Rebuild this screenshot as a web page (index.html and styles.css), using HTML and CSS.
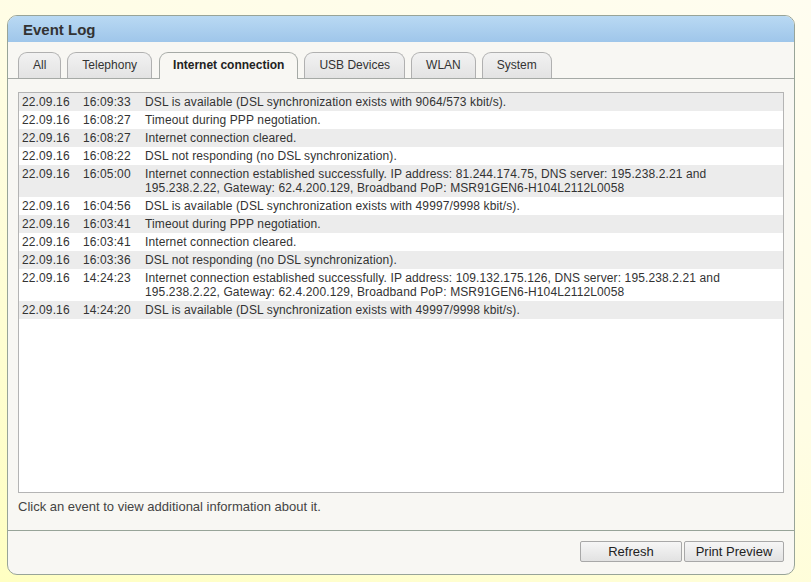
FILE: index.html
```html
<!DOCTYPE html>
<html lang="en">
<head>
    <meta charset="UTF-8">
    <title>Event Log</title>
    <link rel="stylesheet" href="styles.css">
</head>
<body>
    <div class="panel">
        <div class="panel-head">Event Log</div>

        <div class="tabs">
            <div class="tab">All</div>
            <div class="tab">Telephony</div>
            <div class="tab active">Internet connection</div>
            <div class="tab">USB Devices</div>
            <div class="tab">WLAN</div>
            <div class="tab">System</div>
        </div>

        <div class="log">
            <div class="row"><span>22.09.16</span><span>16:09:33</span><span>DSL is available (DSL synchronization exists with 9064/573 kbit/s).</span></div>
            <div class="row"><span>22.09.16</span><span>16:08:27</span><span>Timeout during PPP negotiation.</span></div>
            <div class="row"><span>22.09.16</span><span>16:08:27</span><span>Internet connection cleared.</span></div>
            <div class="row"><span>22.09.16</span><span>16:08:22</span><span>DSL not responding (no DSL synchronization).</span></div>
            <div class="row"><span>22.09.16</span><span>16:05:00</span><span>Internet connection established successfully. IP address: 81.244.174.75, DNS server: 195.238.2.21 and 195.238.2.22, Gateway: 62.4.200.129, Broadband PoP: MSR91GEN6-H104L2112L0058</span></div>
            <div class="row"><span>22.09.16</span><span>16:04:56</span><span>DSL is available (DSL synchronization exists with 49997/9998 kbit/s).</span></div>
            <div class="row"><span>22.09.16</span><span>16:03:41</span><span>Timeout during PPP negotiation.</span></div>
            <div class="row"><span>22.09.16</span><span>16:03:41</span><span>Internet connection cleared.</span></div>
            <div class="row"><span>22.09.16</span><span>16:03:36</span><span>DSL not responding (no DSL synchronization).</span></div>
            <div class="row"><span>22.09.16</span><span>14:24:23</span><span>Internet connection established successfully. IP address: 109.132.175.126, DNS server: 195.238.2.21 and 195.238.2.22, Gateway: 62.4.200.129, Broadband PoP: MSR91GEN6-H104L2112L0058</span></div>
            <div class="row"><span>22.09.16</span><span>14:24:20</span><span>DSL is available (DSL synchronization exists with 49997/9998 kbit/s).</span></div>
        </div>

        <p class="hint">Click an event to view additional information about it.</p>

        <div class="buttons">
            <button class="btn btn-refresh">Refresh</button>
            <button class="btn btn-print">Print Preview</button>
        </div>
    </div>
</body>
</html>
```

FILE: styles.css
```css
body {
    margin: 0;
    padding: 15px 0 0 7px;
    height: 582px;
    box-sizing: border-box;
    font-family: "Liberation Sans", Arial, sans-serif;
    font-size: 12px;
    color: #333;
    background: linear-gradient(205deg, #fffdf0 0%, #fffde4 45%, #ffffc2 100%);
}

.panel {
    width: 788px;
    height: 560px;
    box-sizing: border-box;
    border: 1px solid #98a498;
    border-radius: 10px;
    background-color: #f8f7f3;
    display: flex;
    flex-direction: column;
    overflow: hidden;
}

.panel-head {
    height: 26px;
    line-height: 27px;
    padding-left: 15px;
    font-size: 15px;
    font-weight: bold;
    color: #333;
    background: linear-gradient(to bottom, #b9d9f3, #9fc6ea);
}

.tabs {
    display: flex;
    gap: 6px;
    margin-top: 10px;
    padding-left: 10px;
    border-bottom: 1px solid #a6aaa6;
    height: 26px;
}

.tab {
    height: 25px;
    line-height: 24px;
    padding: 0 14px;
    border: 1px solid #b0b0b0;
    border-bottom: none;
    border-radius: 9px 9px 0 0;
    background: linear-gradient(to bottom, #f2f2f2, #e3e3e3);
    color: #333;
}

.tab.active {
    height: 26px;
    padding: 0 13px;
    margin-left: 1px;
    font-weight: bold;
    color: #222;
    background: #f8f7f3;
    border-color: #a6aaa6;
}

.log {
    margin: 13px 10px 0 10px;
    height: 401px;
    box-sizing: border-box;
    border: 1px solid #b4b4b4;
    background-color: #fff;
}

.row {
    display: grid;
    grid-template-columns: 61px 62px 1fr;
    padding: 2px 50px 2px 3px;
    line-height: 14px;
    letter-spacing: 0.12px;
    color: #333;
}

.row:nth-child(odd) {
    background-color: #ececec;
}

.hint {
    margin: 7px 0 0 10px;
    line-height: 14px;
    font-size: 13px;
    color: #444;
}

.buttons {
    margin-top: 16px;
    border-top: 1px solid #98a498;
    display: flex;
    justify-content: flex-end;
    gap: 2px;
    padding: 10px 10px 0 0;
}

.btn {
    height: 21px;
    padding: 0;
    border: 1px solid #a8a8a8;
    border-radius: 2px;
    background: linear-gradient(to bottom, #f6f6f6, #e2e2e2);
    font-family: "Liberation Sans", Arial, sans-serif;
    font-size: 13px;
    color: #222;
}

.btn-refresh {
    width: 102px;
}

.btn-print {
    width: 100px;
}
```
